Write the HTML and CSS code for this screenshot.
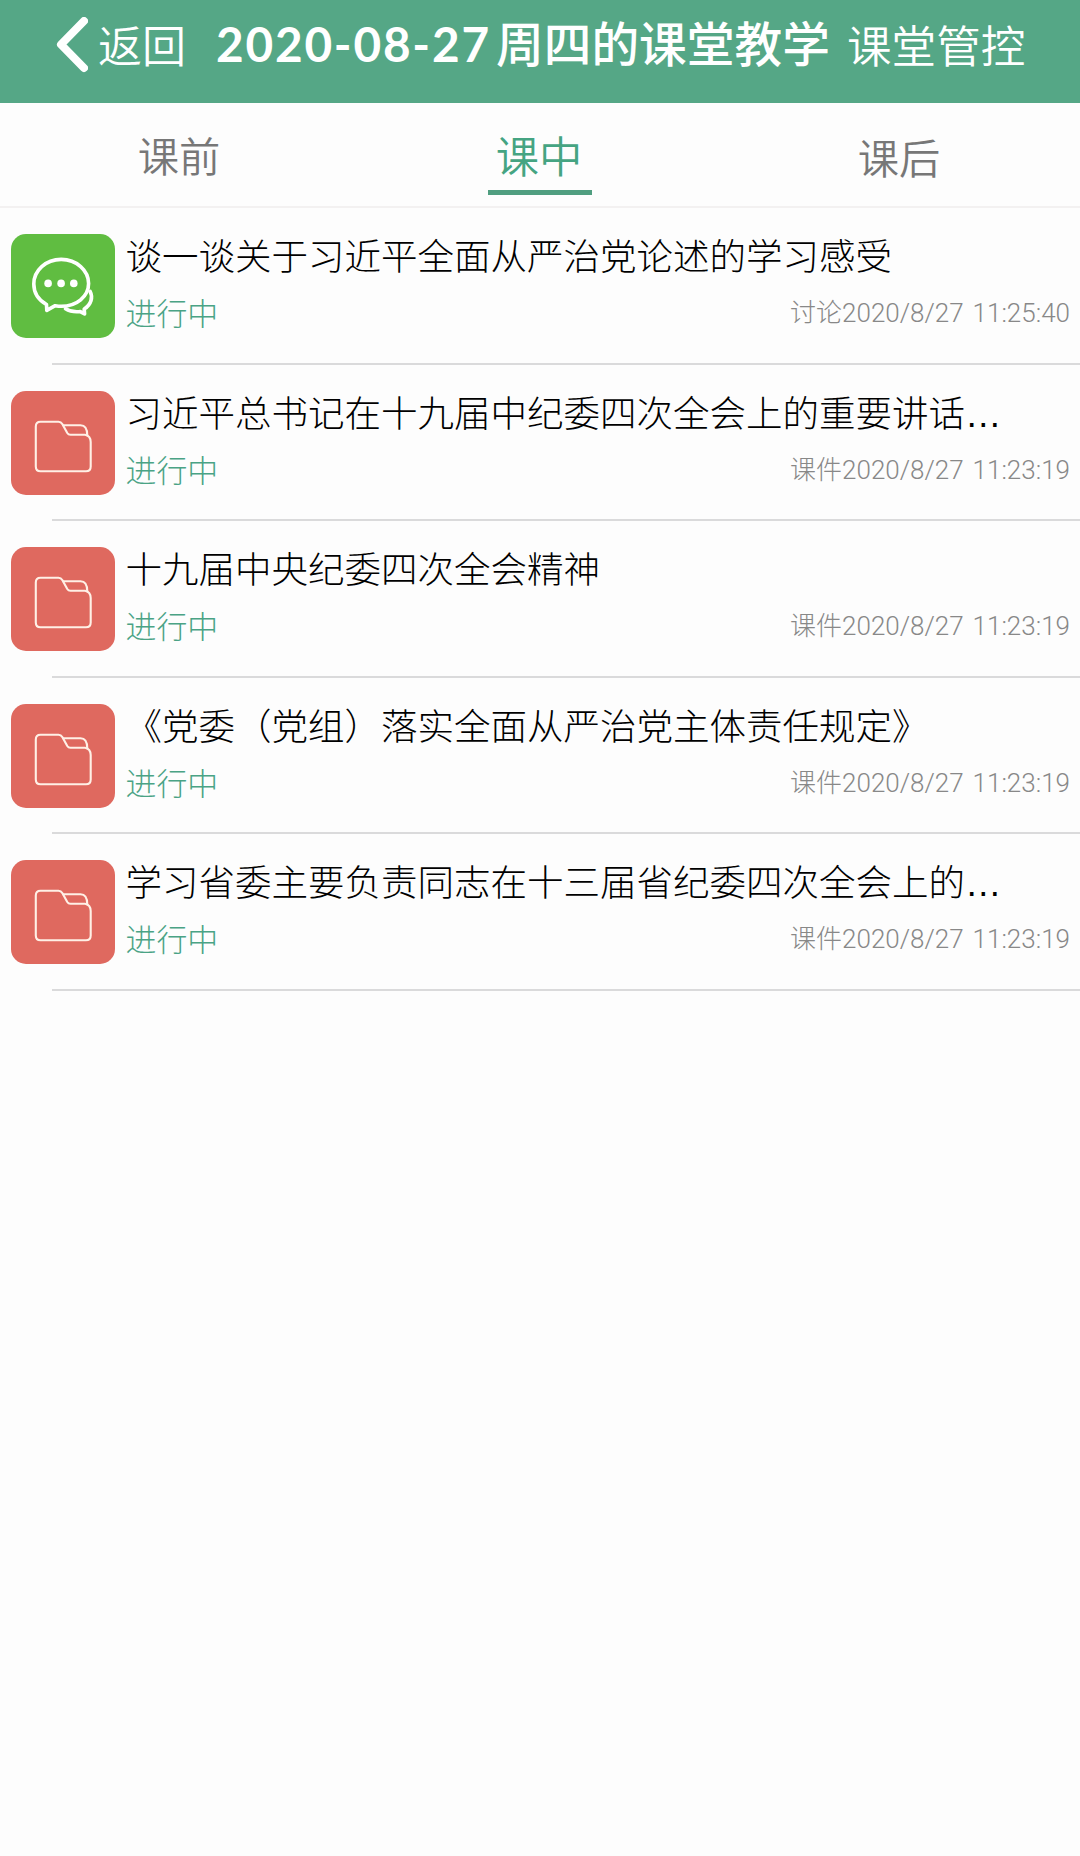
FILE: index.html
```html
<!DOCTYPE html>
<html lang="zh-CN">
<head>
<meta charset="utf-8">
<title>课堂教学</title>
<link rel="stylesheet" href="styles.css">
</head>
<body>
<svg class="defs" width="0" height="0" aria-hidden="true">
  <symbol id="folder" viewBox="0 0 104 104">
    <path d="M29.5 30.7H47.5Q50 30.7 51.3 33L56.3 42Q57.3 43.7 59.5 43.7H74Q79.7 44.8 79.7 51V75.5Q79.7 80.3 75 80.3H29.5Q24.8 80.3 24.8 75.5V35.5Q24.8 30.7 29.5 30.7Z"/>
    <path d="M52 34.2H69.5Q76.3 34.2 76.3 44.5"/>
  </symbol>
  <symbol id="chat" viewBox="0 0 104 104">
    <path d="M35.5 70.5C27.5 66 22.8 58.5 22.8 50C22.8 36.5 34.8 25.4 50.2 25.4S77.6 36.5 77.6 49.5S65.5 72.3 50.2 72.3C48 72.3 46 72 44.2 71.7L35.8 76.3Z"/>
    <path d="M79.2 57.5C82 63 80.5 70.5 73.2 75L73.6 80L69.3 77.6C63.5 78.3 58 77 54.5 74.8"/>
    <g class="dots"><circle cx="37.1" cy="49.4" r="3.8"/><circle cx="50.1" cy="49.4" r="3.8"/><circle cx="62.8" cy="49.4" r="3.8"/></g>
  </symbol>
</svg>

<header class="navbar">
  <a class="back">
    <svg class="chevron" viewBox="0 0 32 56"><path d="M28 4L5 27.5L28 51"/></svg>
    <span>返回</span>
  </a>
  <h1 class="heading"><span class="date">2020-08-27</span>周四的课堂教学</h1>
  <a class="manage">课堂管控</a>
</header>

<nav class="tabs">
  <a class="tab">课前</a>
  <a class="tab active"><span>课中</span></a>
  <a class="tab last">课后</a>
</nav>

<main class="list">
  <article class="item">
    <svg class="tile chat"><use href="#chat"/></svg>
    <div class="body">
      <h2 class="title">谈一谈关于习近平全面从严治党论述的学习感受</h2>
      <p class="meta"><span class="status">进行中</span><span class="time">讨论<span>2020/8/27 11:25:40</span></span></p>
    </div>
  </article>
  <article class="item">
    <svg class="tile folder"><use href="#folder"/></svg>
    <div class="body">
      <h2 class="title">习近平总书记在十九届中纪委四次全会上的重要讲话<span class="more">…</span></h2>
      <p class="meta"><span class="status">进行中</span><span class="time">课件<span>2020/8/27 11:23:19</span></span></p>
    </div>
  </article>
  <article class="item">
    <svg class="tile folder"><use href="#folder"/></svg>
    <div class="body">
      <h2 class="title">十九届中央纪委四次全会精神</h2>
      <p class="meta"><span class="status">进行中</span><span class="time">课件<span>2020/8/27 11:23:19</span></span></p>
    </div>
  </article>
  <article class="item">
    <svg class="tile folder"><use href="#folder"/></svg>
    <div class="body">
      <h2 class="title">《党委（党组）落实全面从严治党主体责任规定》</h2>
      <p class="meta"><span class="status">进行中</span><span class="time">课件<span>2020/8/27 11:23:19</span></span></p>
    </div>
  </article>
  <article class="item">
    <svg class="tile folder"><use href="#folder"/></svg>
    <div class="body">
      <h2 class="title">学习省委主要负责同志在十三届省纪委四次全会上的<span class="more">…</span></h2>
      <p class="meta"><span class="status">进行中</span><span class="time">课件<span>2020/8/27 11:23:19</span></span></p>
    </div>
  </article>
</main>
</body>
</html>
```
FILE: styles.css
```css
* { box-sizing: border-box; margin: 0; padding: 0; }

body {
  background: #fdfdfd;
  color: #000;
  font-family: "Noto Sans CJK SC", sans-serif;
  font-weight: 300;
}

.defs { display: block; }

.navbar {
  display: flex;
  align-items: center;
  height: 103.4px;
  padding: 0 0 16px 56px;
  background: #55a786;
  color: #fff;
  white-space: nowrap;
}

.back { display: flex; align-items: center; width: 160px; font-size: 44px; font-weight: 350; }
.chevron { width: 32px; height: 56px; margin: 3px 10px 0 0; fill: none; stroke: #fff; stroke-width: 8; stroke-linecap: round; stroke-linejoin: round; }
.heading { width: 631px; font-size: 47.7px; font-weight: 500; line-height: 68px; margin-top: -2px; }
.date { display: inline-block; width: 280px; font-family: Lato, sans-serif; font-weight: 700; letter-spacing: 1.8px; }
.manage { font-size: 44.6px; font-weight: 350; }

.tabs {
  display: grid;
  grid-template-columns: 360px 360px 360px;
  height: 104.6px;
  border-bottom: 2px solid #f3f1f1;
  font-weight: 350;
}
.tab { padding-right: 2px; text-align: center; color: #777; font-size: 41.3px; line-height: 102px; }
.tab.active { padding: 0; color: #45a482; }
.tab.active span { display: block; width: 104px; height: 92px; margin: 0 auto; padding-right: 2px; border-bottom: 5px solid #509e80; font-size: 43.3px; }
.tab.last { line-height: 106px; }

.item { display: flex; height: 156.6px; padding: 26px 0 0 10.5px; position: relative; }
.item::after { content: ""; position: absolute; left: 52px; right: 0; bottom: 0; height: 2px; background: #dadadb; }

.tile { flex: none; width: 104px; height: 104px; border-radius: 15px; fill: none; stroke: #fff; stroke-linecap: round; stroke-linejoin: round; }
.tile.chat { background: #60bd41; stroke-width: 3.6; }
.tile.folder { background: #df695f; stroke: #fff0e6; stroke-width: 2.1; }
.dots { fill: #fff; stroke: none; }

.body { flex: 1; padding: 0 10px 0 11px; }
.title { height: 48px; font-size: 36.5px; font-weight: 300; line-height: 42px; white-space: nowrap; }
.more { font-family: "Liberation Sans", Arial, sans-serif; line-height: 1; }
.meta { display: flex; justify-content: space-between; height: 60px; line-height: 59px; }
.status { color: #4aa385; font-size: 30.9px; }
.time { color: #888; font-size: 26px; line-height: 57px; }
.time span { font-family: Roboto, sans-serif; word-spacing: 2.5px; }
```
